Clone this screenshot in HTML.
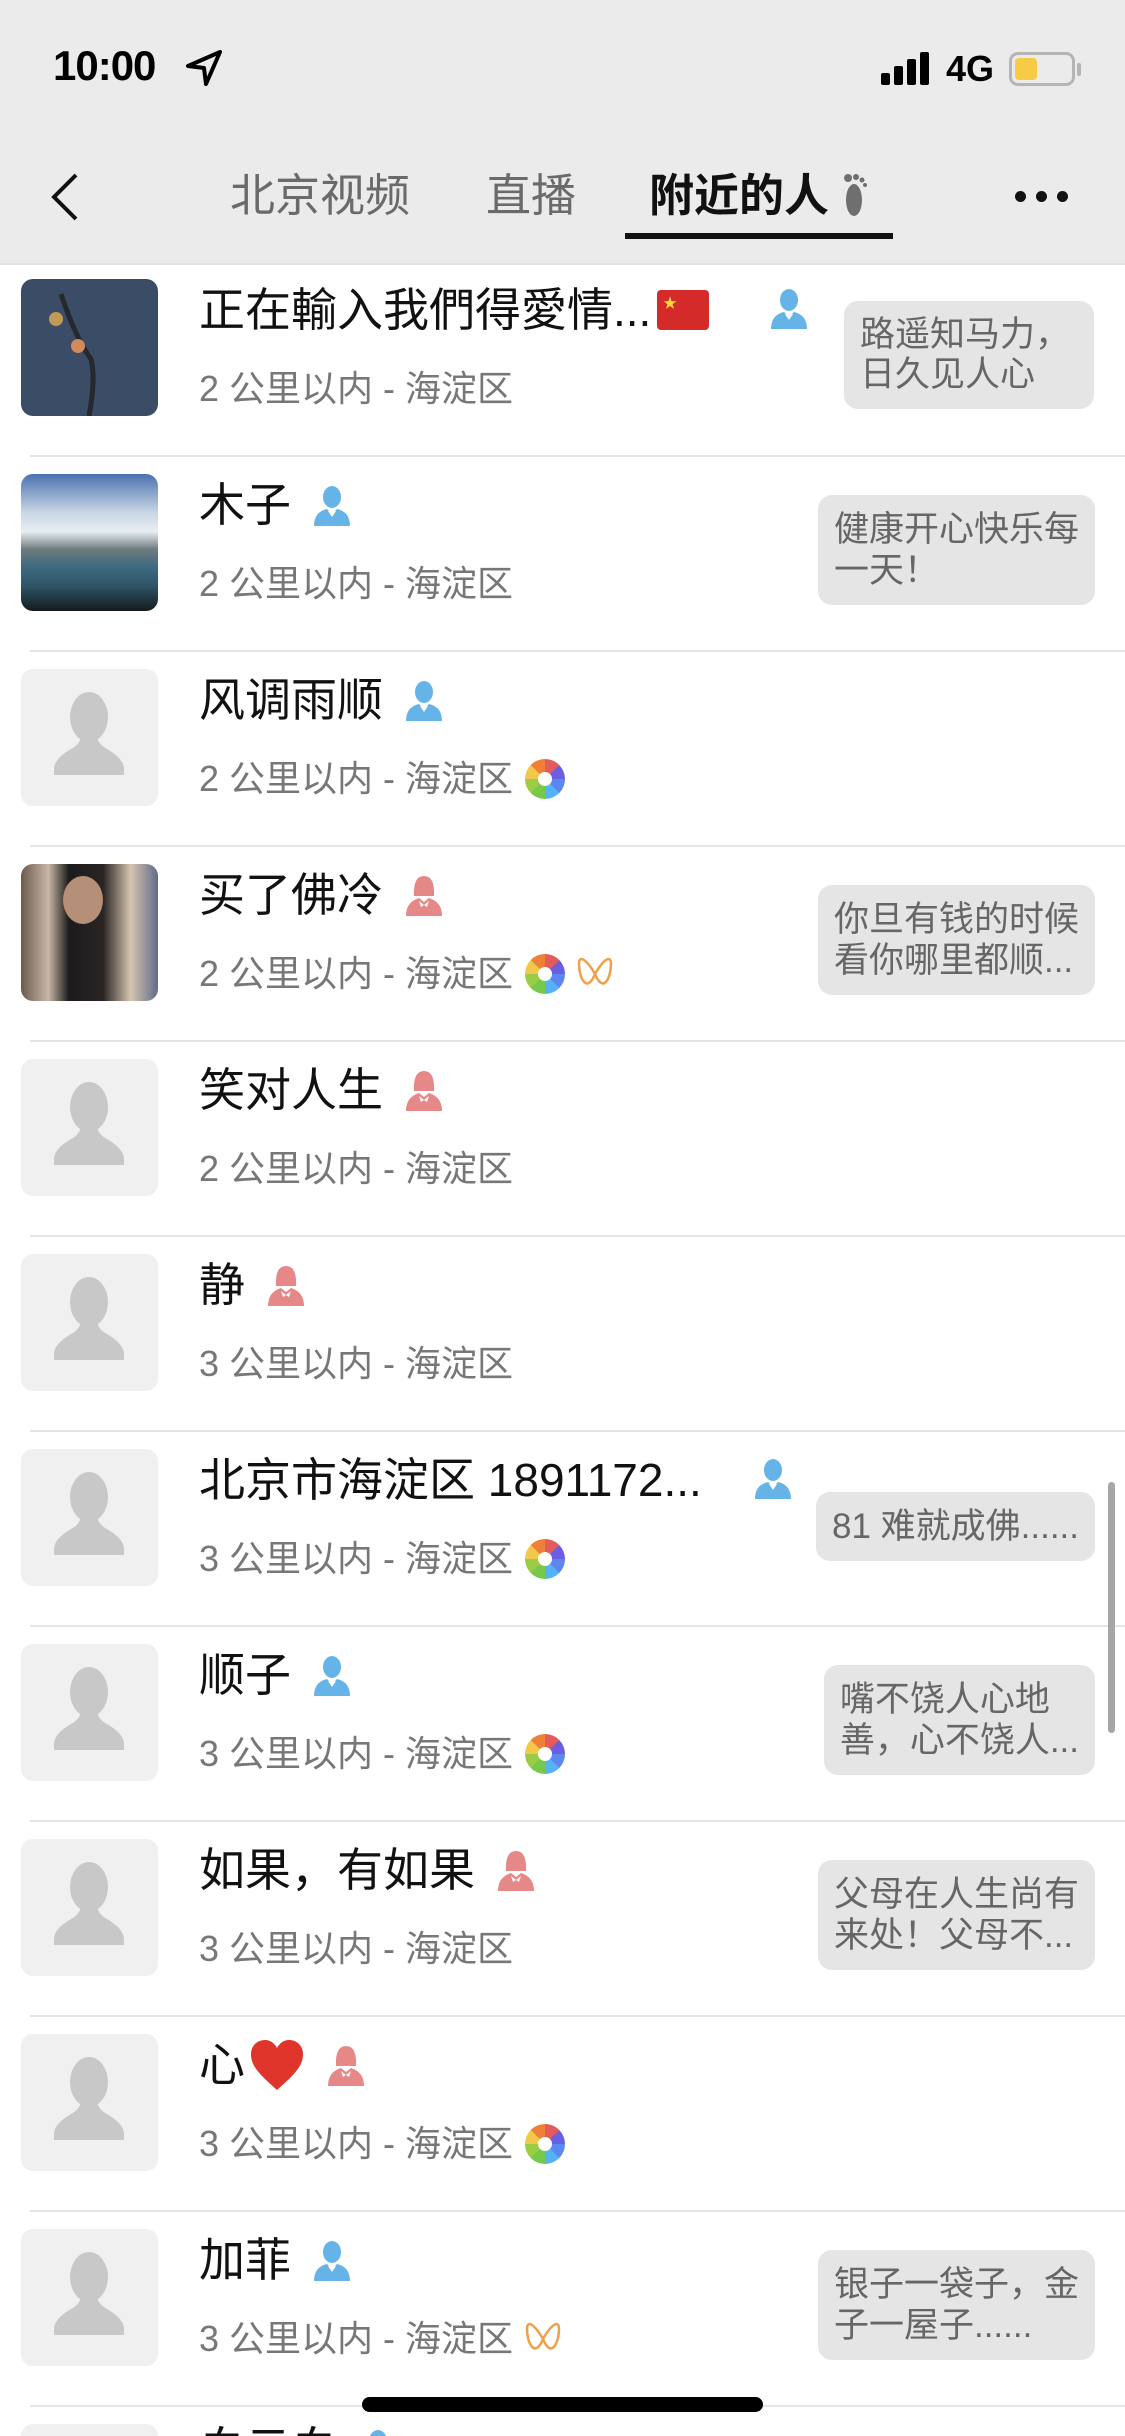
<!DOCTYPE html>
<html style="width:1125px;height:2436px;overflow:hidden"><head><meta charset="utf-8">
<style>
*{margin:0;padding:0;box-sizing:border-box}
body{width:1125px;height:2436px;overflow:hidden;background:#fff;font-family:"Liberation Sans","Noto Sans CJK SC",sans-serif;position:relative}
.hdr{position:absolute;left:0;top:0;width:1125px;height:265px;background:#ebebeb;border-bottom:2px solid #e2e2e2;z-index:5}
.row{position:absolute;left:0;width:1125px;height:195px;overflow:hidden}
.row::before{content:"";position:absolute;left:30px;right:0;top:0;height:2px;background:#e5e5e5}
.row.first::before{display:none}
.av{position:absolute;left:21px;top:19px;width:137px;height:137px;border-radius:12px;background:#f0f0f0;overflow:hidden}
.name{position:absolute;left:199px;top:20px;height:60px;line-height:60px;font-size:46px;color:#111;white-space:nowrap;display:flex;align-items:center}
.dist{position:absolute;left:199px;top:104px;height:50px;line-height:50px;font-size:36px;color:#777;white-space:nowrap;display:flex;align-items:center}
.bub{position:absolute;right:30px;background:#e5e5e5;border-radius:14px;color:#666;font-size:35px;line-height:41px;padding:14px 16px;white-space:nowrap}
.g{margin-left:20px;width:42px;height:42px;display:inline-block}
.ap{margin-left:12px;width:40px;height:40px;border-radius:50%;background:conic-gradient(#e45b5b 0 45deg,#6a5fe0 45deg 90deg,#5c86f0 90deg 135deg,#55b3f5 135deg 180deg,#78c84a 180deg 225deg,#9acc45 225deg 270deg,#f2c84b 270deg 315deg,#ef8037 315deg 360deg);position:relative;display:inline-block}
.ap::after{content:"";position:absolute;left:13px;top:13px;width:14px;height:14px;background:#fff;border-radius:50%}
.bf{margin-left:10px;width:40px;height:44px;display:inline-block}
</style></head><body>
<div class="hdr">
 <div style="position:absolute;left:53px;top:42px;font-size:42px;font-weight:bold;color:#000;letter-spacing:-1px">10:00</div>
 <svg style="position:absolute;left:186px;top:50px" width="36" height="36" viewBox="0 0 36 36"><path d="M34 2 L2 16 L18 18 L20 34 Z" fill="none" stroke="#000" stroke-width="4" stroke-linejoin="round"/></svg>
 <div style="position:absolute;left:881px;top:73px;width:9px;height:12px;background:#000;border-radius:2px"></div>
 <div style="position:absolute;left:894px;top:66px;width:9px;height:19px;background:#000;border-radius:2px"></div>
 <div style="position:absolute;left:907px;top:59px;width:9px;height:26px;background:#000;border-radius:2px"></div>
 <div style="position:absolute;left:920px;top:52px;width:9px;height:33px;background:#000;border-radius:2px"></div>
 <div style="position:absolute;left:946px;top:48px;font-size:36px;font-weight:bold;color:#000">4G</div>
 <div style="position:absolute;left:1009px;top:52px;width:66px;height:34px;border:3px solid #b5b5b5;border-radius:9px"><div style="position:absolute;left:3px;top:3px;width:22px;height:22px;background:#f7cb46;border-radius:4px"></div></div>
 <div style="position:absolute;left:1077px;top:63px;width:4px;height:13px;background:#b5b5b5;border-radius:2px"></div>
 <svg style="position:absolute;left:48px;top:172px" width="34" height="50" viewBox="0 0 34 50"><path d="M28 3 L6 25 L28 47" fill="none" stroke="#111" stroke-width="4"/></svg>
 <div style="position:absolute;left:230px;top:168px;font-size:45px;color:#6a6a6a;line-height:56px">北京视频</div>
 <div style="position:absolute;left:486px;top:168px;font-size:45px;color:#6a6a6a;line-height:56px">直播</div>
 <div style="position:absolute;left:649px;top:168px;font-size:45px;color:#111;font-weight:bold;line-height:56px">附近的人</div>
 <svg style="position:absolute;left:840px;top:172px" width="30" height="46" viewBox="0 0 30 46"><ellipse cx="14" cy="28" rx="8" ry="16" fill="#6f6f6f"/><circle cx="8" cy="6" r="4" fill="#6f6f6f"/><circle cx="16" cy="5" r="3" fill="#6f6f6f"/><circle cx="22" cy="8" r="2.5" fill="#6f6f6f"/><circle cx="25" cy="13" r="2" fill="#6f6f6f"/></svg>
 <div style="position:absolute;left:625px;top:233px;width:268px;height:6px;background:#111"></div>
 <div style="position:absolute;left:1015px;top:191px;width:11px;height:11px;border-radius:50%;background:#111"></div>
 <div style="position:absolute;left:1036px;top:191px;width:11px;height:11px;border-radius:50%;background:#111"></div>
 <div style="position:absolute;left:1057px;top:191px;width:11px;height:11px;border-radius:50%;background:#111"></div>
</div>

<svg width="0" height="0" style="position:absolute">
 <defs>
  <symbol id="m" viewBox="0 0 42 42"><ellipse cx="21" cy="13" rx="9" ry="11" fill="#66b3e8"/><path d="M3 42 Q3 28 16 25 L21 30 L26 25 Q39 28 39 42 Z" fill="#66b3e8"/><path d="M17 27 L21 33 L25 27 Z" fill="#fff"/></symbol>
  <symbol id="f" viewBox="0 0 42 42"><path d="M11 22 Q10 2 21 2 Q32 2 31 22 Z" fill="#e58887"/><path d="M3 42 Q3 28 16 24 L21 28 L26 24 Q39 28 39 42 Z" fill="#e58887"/><path d="M16 27 L21 31 L26 27 L24 33 L21 31 L18 33 Z" fill="#fff"/></symbol>
  <symbol id="sil" viewBox="0 0 137 137"><ellipse cx="68" cy="48" rx="19" ry="25" fill="#c8c8c8"/><path d="M33 100 Q33 90 50 80 Q58 76 60 68 L76 68 Q78 76 86 80 Q103 90 103 100 L103 106 L33 106 Z" fill="#c8c8c8"/></symbol>
  <symbol id="bfly" viewBox="0 0 40 44"><path d="M20 22 C12 8 4 2 4 12 C4 26 12 42 20 22 C28 42 36 26 36 12 C36 2 28 8 20 22 Z" fill="none" stroke="#eea04a" stroke-width="2.5"/></symbol>
 </defs>
</svg>

<div class="row first" style="top:260px">
 <div class="av" style="background:#3b4d66"><svg width="137" height="137"><path d="M40 15 Q55 60 70 80 Q75 100 68 137" stroke="#25282c" stroke-width="5" fill="none"/><circle cx="35" cy="40" r="7" fill="#c29a55"/><circle cx="57" cy="67" r="7" fill="#d18a5a"/></svg></div>
 <div class="name">正在輸入我們得愛情...<svg width="52" height="40" style="margin-left:6px"><rect width="52" height="40" rx="4" fill="#d42a2a"/><text x="6" y="18" font-size="14" fill="#ffd93a">★</text></svg></div>
 <svg class="g" style="position:absolute;left:768px;top:27px;margin:0"><use href="#m"/></svg>
 <div class="dist">2 公里以内 - 海淀区</div>
 <div class="bub" style="right:31px;top:41px;width:250px;font-size:35px;line-height:40px">路遥知马力，<br>日久见人心</div>
</div>
<div class="row" style="top:455px">
 <div class="av" style="background:linear-gradient(#4a72b0 0%,#c9d6e4 28%,#e8eef3 42%,#6c7b7e 55%,#3d6a80 68%,#2e5466 82%,#151a1d 100%)"></div>
 <div class="name">木子<svg class="g"><use href="#m"/></svg></div>
 <div class="dist">2 公里以内 - 海淀区</div>
 <div class="bub" style="top:40px">健康开心快乐每<br>一天！</div>
</div>
<div class="row" style="top:650px">
 <div class="av"><svg width="137" height="137"><use href="#sil"/></svg></div>
 <div class="name">风调雨顺<svg class="g"><use href="#m"/></svg></div>
 <div class="dist">2 公里以内 - 海淀区<span class="ap"></span></div>
</div>
<div class="row" style="top:845px">
 <div class="av" style="background:linear-gradient(90deg,#6b5a4f 0%,#c9b7a6 20%,#1b1a1c 35%,#2a2524 60%,#d6c4b0 80%,#5f6c8a 100%)"><div style="position:absolute;left:42px;top:12px;width:40px;height:48px;border-radius:50%;background:#b68f78"></div></div>
 <div class="name">买了佛冷<svg class="g"><use href="#f"/></svg></div>
 <div class="dist">2 公里以内 - 海淀区<span class="ap"></span><svg class="bf"><use href="#bfly"/></svg></div>
 <div class="bub" style="top:40px">你旦有钱的时候<br>看你哪里都顺...</div>
</div>
<div class="row" style="top:1040px">
 <div class="av"><svg width="137" height="137"><use href="#sil"/></svg></div>
 <div class="name">笑对人生<svg class="g"><use href="#f"/></svg></div>
 <div class="dist">2 公里以内 - 海淀区</div>
</div>
<div class="row" style="top:1235px">
 <div class="av"><svg width="137" height="137"><use href="#sil"/></svg></div>
 <div class="name">静<svg class="g"><use href="#f"/></svg></div>
 <div class="dist">3 公里以内 - 海淀区</div>
</div>
<div class="row" style="top:1430px">
 <div class="av"><svg width="137" height="137"><use href="#sil"/></svg></div>
 <div class="name">北京市海淀区 1891172...</div>
 <svg class="g" style="position:absolute;left:752px;top:27px;margin:0"><use href="#m"/></svg>
 <div class="dist">3 公里以内 - 海淀区<span class="ap"></span></div>
 <div class="bub" style="top:62px;padding:14px 16px">81 难就成佛......</div>
</div>
<div class="row" style="top:1625px">
 <div class="av"><svg width="137" height="137"><use href="#sil"/></svg></div>
 <div class="name">顺子<svg class="g"><use href="#m"/></svg></div>
 <div class="dist">3 公里以内 - 海淀区<span class="ap"></span></div>
 <div class="bub" style="top:40px">嘴不饶人心地<br>善，心不饶人...</div>
</div>
<div class="row" style="top:1820px">
 <div class="av"><svg width="137" height="137"><use href="#sil"/></svg></div>
 <div class="name">如果，有如果<svg class="g"><use href="#f"/></svg></div>
 <div class="dist">3 公里以内 - 海淀区</div>
 <div class="bub" style="top:40px">父母在人生尚有<br>来处！父母不...</div>
</div>
<div class="row" style="top:2015px">
 <div class="av"><svg width="137" height="137"><use href="#sil"/></svg></div>
 <div class="name">心<svg width="56" height="54" viewBox="0 0 56 54" style="margin-left:4px"><path d="M28 52 C10 36 2 28 2 16 C2 7 9 2 16 2 C22 2 26 6 28 10 C30 6 34 2 40 2 C47 2 54 7 54 16 C54 28 46 36 28 52 Z" fill="#e0352b"/></svg><svg class="g"><use href="#f"/></svg></div>
 <div class="dist">3 公里以内 - 海淀区<span class="ap"></span></div>
</div>
<div class="row" style="top:2210px">
 <div class="av"><svg width="137" height="137"><use href="#sil"/></svg></div>
 <div class="name">加菲<svg class="g"><use href="#m"/></svg></div>
 <div class="dist">3 公里以内 - 海淀区<svg class="bf"><use href="#bfly"/></svg></div>
 <div class="bub" style="top:40px">银子一袋子，金<br>子一屋子......</div>
</div>
<div class="row" style="top:2405px;height:31px">
 <div class="av"><svg width="137" height="137"><use href="#sil"/></svg></div>
 <div class="name" style="top:14px">白云白<svg class="g"><use href="#m"/></svg></div>
</div>

<div style="position:absolute;left:1108px;top:1482px;width:7px;height:251px;background:#a6a6a6;border-radius:4px"></div>
<div style="position:absolute;left:362px;top:2397px;width:401px;height:15px;background:#000;border-radius:8px;z-index:6"></div>
</body></html>
